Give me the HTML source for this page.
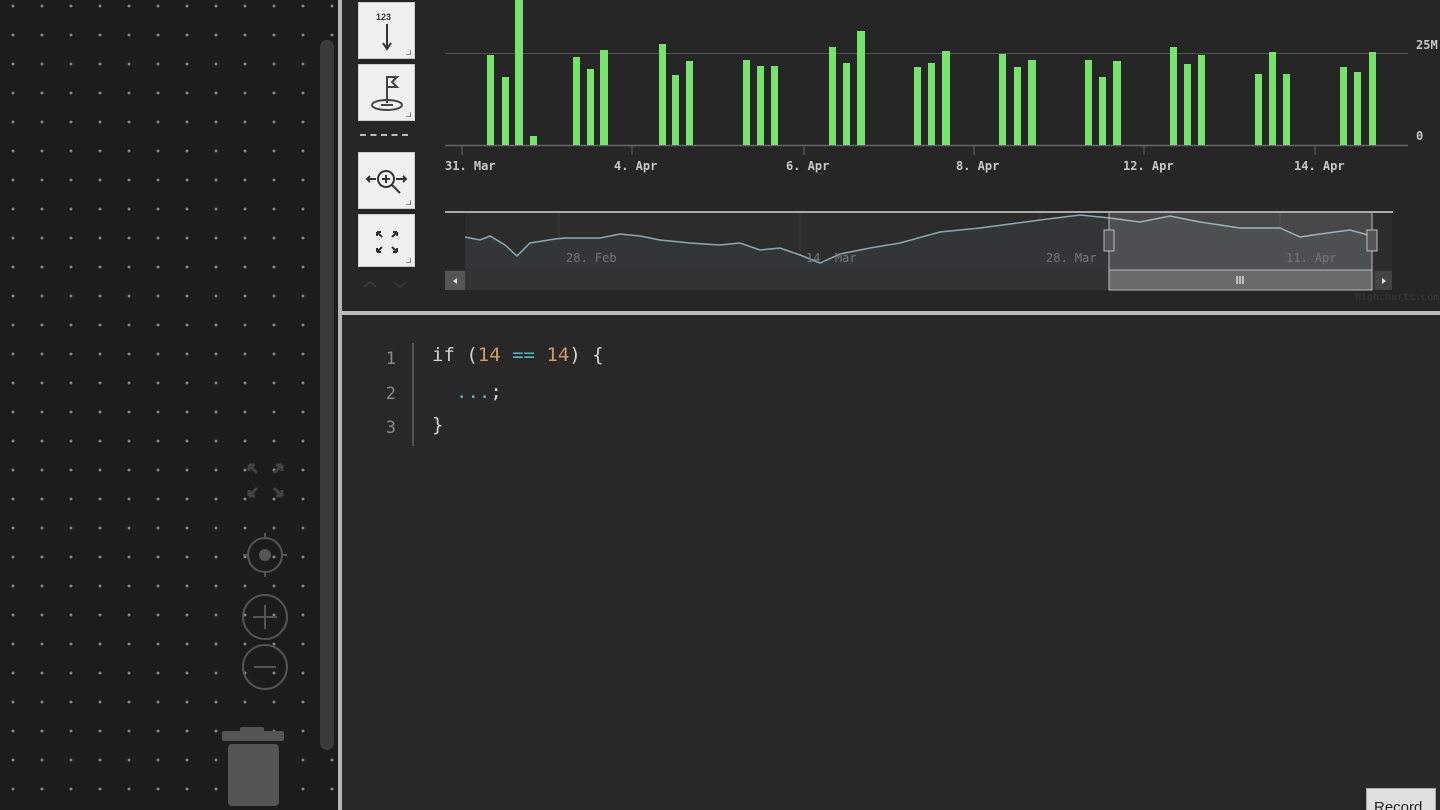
<!DOCTYPE html>
<html style="width:1440px;height:810px;overflow:hidden"><head><meta charset="utf-8"><style>
*{margin:0;padding:0;box-sizing:border-box}
body{width:1440px;height:810px;overflow:hidden;background:#282828;font-family:"Liberation Sans",sans-serif;position:relative}
#left{position:absolute;left:0;top:0;width:340px;height:810px;background-color:#1c1c1c;
background-image:radial-gradient(circle,#8a8a8a 0 1.2px,transparent 1.7px);background-size:29px 29px;background-position:-1.5px -8.5px}
#vsep{position:absolute;left:338px;top:0;width:4px;height:810px;background:#b5b5b5}
#chart{position:absolute;left:342px;top:0;width:1098px;height:312px;background:#262626}
#hsep{position:absolute;left:342px;top:311px;width:1098px;height:4px;background:#bdbdbd}
.btn{position:absolute;left:358px;width:57px;background:#f0f0f0;border:1px solid #ccc}
.btn:after{content:"";position:absolute;right:3px;bottom:3px;width:4px;height:4px;border-right:1px solid #888;border-bottom:1px solid #888}
.code{position:absolute;font-family:"DejaVu Sans Mono","Liberation Mono",monospace;font-size:19px;color:#d4d4d4}
.ln{position:absolute;left:372px;width:24px;text-align:right;font-family:"DejaVu Sans Mono",monospace;font-size:17px;color:#8a8a8a}
.lbl{position:absolute;font-family:"DejaVu Sans Mono",monospace;font-size:12px;font-weight:bold;color:#c8c8c8}
</style></head><body>
<div id="left"></div>
<div style="position:absolute;left:320px;top:40px;width:14px;height:710px;background:#3a3a3a;border-radius:7px"></div>
<svg style="position:absolute;left:0;top:0" width="340" height="810">
<g stroke="#444" stroke-width="3" fill="none">
<path d="M249 465l8 8M249 465h6M249 465v6M282 465l-8 8M282 465h-6M282 465v6M249 496l8-8M249 496h6M249 496v-6M282 496l-8-8M282 496h-6M282 496v-6"/>
</g>
<g stroke="#555" stroke-width="2" fill="none">
<circle cx="265" cy="555" r="17"/><path d="M265 533v6M265 571v6M243 555h6M281 555h6"/>
<circle cx="265" cy="617" r="22"/><path d="M253 617h24M265 605v24"/>
<circle cx="265" cy="667" r="22"/><path d="M254 667h22"/>
</g>
<circle cx="265" cy="555" r="6" fill="#555"/>
<rect x="222" y="731" width="62" height="10" rx="2" fill="#555"/>
<rect x="240" y="727" width="24" height="6" rx="2" fill="#555"/>
<rect x="228" y="744" width="51" height="62" rx="4" fill="#555"/>
</svg>
<div id="vsep"></div>
<div id="chart"></div>
<div id="hsep"></div>

<div class="btn" style="top:2px;height:57px"><div style="position:absolute;left:17px;top:9px;font-size:9px;font-weight:bold;color:#333">123</div>
<svg style="position:absolute;left:20px;top:20px" width="16" height="30"><path d="M8 1v24M4 20l4 6 4-6" stroke="#333" stroke-width="2" fill="none"/></svg></div>
<div class="btn" style="top:64px;height:57px"><svg width="57" height="57"><g stroke="#444" stroke-width="2" fill="none"><path d="M28 38V12l10 0-5 5 5 5h-10"/><ellipse cx="28" cy="40" rx="15" ry="5"/><path d="M22 40h12"/></g></svg></div>
<div style="position:absolute;left:360px;top:134px;width:48px;border-top:2px dashed #bbb"></div>
<div class="btn" style="top:152px;height:57px"><svg width="57" height="57"><g stroke="#333" stroke-width="2" fill="none"><circle cx="27" cy="26" r="8"/><path d="M33 32l8 8M23 26h8M27 22v8M9 26h8M37 26h9M11 23l-3 3 3 3M44 23l3 3-3 3"/></g></svg></div>
<div class="btn" style="top:214px;height:53px"><svg width="57" height="53"><g stroke="#333" stroke-width="2" fill="none"><path d="M18 17l5 5M18 17v4M18 17h4M38 17l-5 5M38 17v4M38 17h-4M18 37l5-5M18 37v-4M18 37h4M38 37l-5-5M38 37v-4M38 37h-4"/></g></svg></div>
<svg style="position:absolute;left:360px;top:276px" width="56" height="14"><path d="M4 11l6-5 6 5M34 6l6 5 6-5" stroke="#3a3a3a" stroke-width="2" fill="none"/></svg>

<svg style="position:absolute;left:0;top:0" width="1440" height="312">
<line x1="445" y1="53.5" x2="1408" y2="53.5" stroke="#555" stroke-width="1"/>
<line x1="445" y1="145.5" x2="1408" y2="145.5" stroke="#666" stroke-width="1.5"/>
<g fill="#77e26c">
<rect x="487" y="55" width="7" height="90"/><rect x="502" y="77" width="7" height="68"/><rect x="515" y="0" width="8" height="145"/><rect x="530" y="136" width="7" height="9"/>
<rect x="573" y="57" width="7" height="88"/><rect x="587" y="69" width="7" height="76"/><rect x="600" y="50" width="8" height="95"/>
<rect x="659" y="44" width="7" height="101"/><rect x="672" y="75" width="7" height="70"/><rect x="686" y="61" width="7" height="84"/>
<rect x="743" y="60" width="7" height="85"/><rect x="757" y="66" width="7" height="79"/><rect x="771" y="66" width="7" height="79"/>
<rect x="829" y="47" width="7" height="98"/><rect x="843" y="63" width="7" height="82"/><rect x="857" y="31" width="8" height="114"/>
<rect x="914" y="67" width="7" height="78"/><rect x="928" y="63" width="7" height="82"/><rect x="942" y="51" width="8" height="94"/>
<rect x="999" y="54" width="7" height="91"/><rect x="1014" y="67" width="7" height="78"/><rect x="1028" y="60" width="8" height="85"/>
<rect x="1085" y="60" width="7" height="85"/><rect x="1099" y="77" width="7" height="68"/><rect x="1113" y="61" width="8" height="84"/>
<rect x="1170" y="47" width="7" height="98"/><rect x="1184" y="64" width="7" height="81"/><rect x="1198" y="55" width="7" height="90"/>
<rect x="1255" y="74" width="7" height="71"/><rect x="1269" y="52" width="7" height="93"/><rect x="1283" y="74" width="7" height="71"/>
<rect x="1340" y="67" width="7" height="78"/><rect x="1354" y="72" width="7" height="73"/><rect x="1369" y="52" width="7" height="93"/>
</g>
<g stroke="#666"><path d="M462 146v9M632 146v9M804 146v9M974 146v9M1144 146v9M1315 146v9"/></g>
<rect x="465" y="213" width="927" height="57" fill="#2c2c2c"/>
<rect x="445" y="270" width="947" height="20" fill="#333"/>
<line x1="445" y1="212" x2="1393" y2="212" stroke="#aaa" stroke-width="2"/>
<g stroke="#3d3d3d"><path d="M559 213v57M800 213v57M1040 213v57M1280 213v57"/></g>
<polygon fill="#323638" points="465,237 480,240 490,236 505,245 517,256 530,243 555,239 565,238 600,238 620,234 640,236 660,240 690,243 720,245 740,243 760,250 780,248 800,255 820,263 840,254 870,248 900,243 940,232 980,228 1040,220 1080,215 1110,218 1140,222 1170,216 1200,222 1240,228 1280,228 1300,237 1320,234 1350,230 1372,236 1372,270 465,270"/>
<polyline fill="none" stroke="#8aa9b3" stroke-width="1.5" points="465,237 480,240 490,236 505,245 517,256 530,243 555,239 565,238 600,238 620,234 640,236 660,240 690,243 720,245 740,243 760,250 780,248 800,255 820,263 840,254 870,248 900,243 940,232 980,228 1040,220 1080,215 1110,218 1140,222 1170,216 1200,222 1240,228 1280,228 1300,237 1320,234 1350,230 1372,236"/>
<rect x="1109" y="213" width="263" height="57" fill="rgba(255,255,255,0.13)"/>
<rect x="1109" y="270" width="263" height="20" fill="#6a6a6a" stroke="#bbb" stroke-width="1"/>
<line x1="1109" y1="213" x2="1109" y2="290" stroke="#bbb"/><line x1="1372" y1="213" x2="1372" y2="290" stroke="#bbb"/>
<path d="M1237 276v8M1240 276v8M1243 276v8" stroke="#ddd" stroke-width="1.5"/>
<rect x="1104" y="230" width="10" height="21" fill="#555" stroke="#bbb"/><rect x="1367" y="230" width="10" height="21" fill="#555" stroke="#bbb"/>
<rect x="445" y="271" width="20" height="19" fill="#555"/><path d="M457 278v6l-4-3z" fill="#ddd"/>
<rect x="1375" y="271" width="17" height="19" fill="#444"/><path d="M1382 278v6l4-3z" fill="#ddd"/>
</svg>
<div class="lbl" style="left:445px;top:159px">31. Mar</div>
<div class="lbl" style="left:614px;top:159px">4. Apr</div>
<div class="lbl" style="left:786px;top:159px">6. Apr</div>
<div class="lbl" style="left:956px;top:159px">8. Apr</div>
<div class="lbl" style="left:1123px;top:159px">12. Apr</div>
<div class="lbl" style="left:1294px;top:159px">14. Apr</div>
<div class="lbl" style="left:1416px;top:38px">25M</div>
<div class="lbl" style="left:1416px;top:129px">0</div>
<div class="lbl" style="left:566px;top:251px;color:#777;font-weight:normal">28. Feb</div>
<div class="lbl" style="left:806px;top:251px;color:#777;font-weight:normal">14. Mar</div>
<div class="lbl" style="left:1046px;top:251px;color:#777;font-weight:normal">28. Mar</div>
<div class="lbl" style="left:1286px;top:251px;color:#777;font-weight:normal">11. Apr</div>
<div class="lbl" style="left:1355px;top:292px;color:#3a3a3a;font-weight:normal;font-size:10px">Highcharts.com</div>

<div style="position:absolute;left:412px;top:343px;width:2px;height:103px;background:#555"></div>
<div class="ln" style="top:349px">1</div>
<div class="ln" style="top:384px">2</div>
<div class="ln" style="top:418px">3</div>
<div class="code" style="left:432px;top:344px">if (<span style="color:#d19a66">14</span> <span style="color:#56b6c2">==</span> <span style="color:#d19a66">14</span>) {</div>
<div class="code" style="left:456px;top:381px"><span style="color:#56b6c2">...</span>;</div>
<div class="code" style="left:432px;top:414px">}</div>

<div style="position:absolute;left:1366px;top:788px;width:70px;height:22px;overflow:hidden;background:#e0e0e0;border:1px solid #aaa;border-bottom:none;font-size:15px;color:#222;padding:10px 0 0 7px;line-height:17px">Record</div>
</body></html>
